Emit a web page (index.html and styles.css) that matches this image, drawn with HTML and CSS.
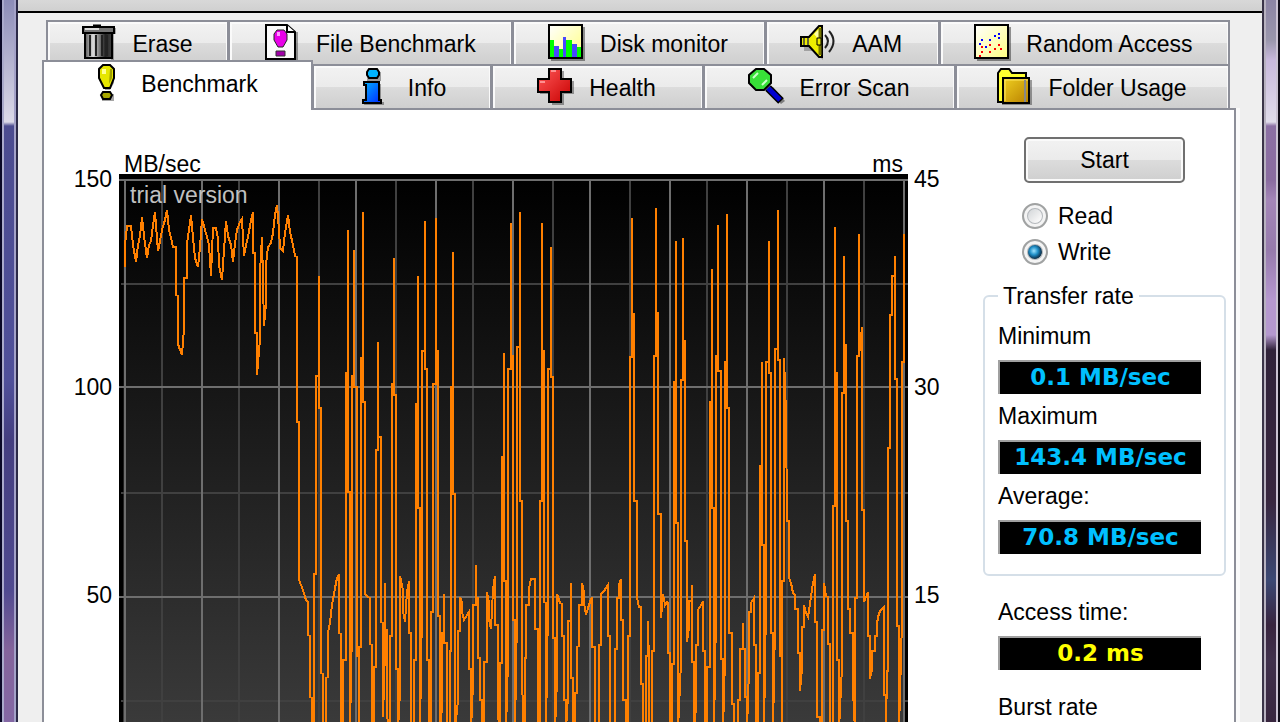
FILE: index.html
```
<!DOCTYPE html>
<html lang="en">
<head>
    <meta charset="UTF-8">
    <meta name="viewport" content="width=device-width, initial-scale=1.0">
    <title>Disk Benchmark</title>
    <link rel="stylesheet" href="styles.css">
</head>
<body>
    <div class="window">
        <div class="frame frame-left"></div>
        <main class="client">
            <div class="toolbar-edge"></div>

            <div class="tabs" role="tablist">
                <div class="tab-row tab-row-back">
                    <button class="tab" role="tab">
                        <svg class="icon" viewBox="0 0 36 36">
                            <defs>
                                <linearGradient id="metal" x1="0" x2="1" y1="0" y2="0">
                                    <stop offset="0" stop-color="#555"/>
                                    <stop offset=".3" stop-color="#ddd"/>
                                    <stop offset=".55" stop-color="#777"/>
                                    <stop offset=".75" stop-color="#222"/>
                                    <stop offset="1" stop-color="#444"/>
                                </linearGradient>
                            </defs>
                            <path d="M32 4h3v6h-2v26h-3z" fill="#000" opacity=".3"/>
                            <path d="M4 9h27v25H4z" fill="url(#metal)" stroke="#000" stroke-width="2"/>
                            <path d="M2 3h31v6H2z" fill="#777" stroke="#000" stroke-width="2"/>
                            <path d="M12 2h8" stroke="#000" stroke-width="3"/>
                            <path d="M4 5h14" stroke="#ddd" stroke-width="2"/>
                            <path d="M9 11v21M15 11v21M21 11v21M26 11v21" stroke="#222" stroke-width="2"/>
                        </svg>
                        Erase
                    </button>
                    <button class="tab" role="tab">
                        <svg class="icon" viewBox="0 0 36 36">
                            <path d="M5 37h29V8h-2v26H5z" fill="#000" opacity=".35"/>
                            <path d="M2 1h21l8 7v27H2z" fill="#fafafa" stroke="#000" stroke-width="2"/>
                            <path d="M23 1v7h8" fill="#fff" stroke="#000" stroke-width="2"/>
                            <path d="M13 6h7l3 4v6l-4 7h-5l-4-7v-6z" fill="#e800e8" stroke="#222" stroke-width="1"/>
                            <path d="M13 8h3v4h-3z" fill="#ff9cff"/>
                            <path d="M12 27h9v5h-9z" fill="#a000a8" stroke="#333" stroke-width="1"/>
                        </svg>
                        File Benchmark
                    </button>
                    <button class="tab" role="tab">
                        <svg class="icon" viewBox="0 0 36 36">
                            <defs>
                                <linearGradient id="paper" x1="0" y1="0" x2="1" y2="1">
                                    <stop offset="0" stop-color="#fff"/>
                                    <stop offset="1" stop-color="#ffff80"/>
                                </linearGradient>
                            </defs>
                            <path d="M3 3h34v34H3z" fill="#000" opacity=".4"/>
                            <path d="M1 1h33v33H1z" fill="url(#paper)" stroke="#000" stroke-width="2"/>
                            <path d="M2 16h4v17H2zM11 25h4v8h-4zM18 16h6v17h-6zM29 23h4v10h-4z" fill="#0f0"/>
                            <path d="M6 22h5v11H6zM15 13h3v20h-3zM24 20h5v13h-5z" fill="#4848ff"/>
                        </svg>
                        Disk monitor
                    </button>
                    <button class="tab" role="tab">
                        <svg class="icon" viewBox="0 0 36 36">
                            <path d="M23 4v32l-9-9H4v-4h18z" fill="#000" opacity=".25"/>
                            <path d="M1 13h8L19 2h3v31h-3L9 22H1z" fill="#ee0" stroke="#000" stroke-width="2"/>
                            <path d="M4 14v7M8 14v7" stroke="#663" stroke-width="2"/>
                            <path d="M14 10l5-5v11z" fill="#ffffa0"/>
                            <path d="M20 4v27" stroke="#770" stroke-width="3"/>
                            <path d="M17 14h4v7h-4z" fill="#ee0" stroke="#000" stroke-width="1"/>
                            <path d="M25 11q6 6 0 13M29 7q9 10 0 21" fill="none" stroke="#222" stroke-width="2"/>
                        </svg>
                        AAM
                    </button>
                    <button class="tab" role="tab">
                        <svg class="icon" viewBox="0 0 36 36">
                            <path d="M3 3h34v34H3z" fill="#000" opacity=".4"/>
                            <path d="M1 1h33v33H1z" fill="url(#paper)" stroke="#000" stroke-width="2"/>
                            <path d="M5 19h2v2H5zM7 15h2v2H7zM11 22h2v2h-2zM15 15h2v2h-2zM20 11h2v2h-2zM24 9h2v2h-2zM24 13h2v2h-2z" fill="#00f"/>
                            <path d="M5 31h2v2H5zM7 22h2v2H7zM7 27h2v2H7zM15 20h2v2h-2zM15 27h2v2h-2zM20 24h2v2h-2zM24 20h2v2h-2zM26 24h2v2h-2z" fill="#f00"/>
                        </svg>
                        Random Access
                    </button>
                </div>
                <div class="tab-row tab-row-front">
                    <button class="tab active" role="tab" aria-selected="true">
                        <svg class="icon" viewBox="0 0 36 36">
                            <path d="M14 3h11v16l-4 7h-5zM13 30h12v7H13z" fill="#000" opacity=".35"/>
                            <path d="M14 1h7l4 4v9l-4 10h-6L10 14V5z" fill="#e6e600" stroke="#000" stroke-width="2"/>
                            <path d="M13 5h4v5h-4z" fill="#ffff90"/>
                            <path d="M21 5h2v9l-3 6z" fill="#a0a000"/>
                            <path d="M14 28h7l2 3-2 4h-7l-2-4z" fill="#a8a800" stroke="#000" stroke-width="2"/>
                        </svg>
                        Benchmark
                    </button>
                    <button class="tab" role="tab">
                        <svg class="icon" viewBox="0 0 36 36">
                            <defs>
                                <linearGradient id="blue" x1="0" y1="0" x2="1" y2="1">
                                    <stop offset="0" stop-color="#00b4ff"/>
                                    <stop offset="1" stop-color="#0028ff"/>
                                </linearGradient>
                            </defs>
                            <path d="M12 4h13v9h-4v3h4v18h3v3H8z" fill="#000" opacity=".35"/>
                            <path d="M13 1h8l2 3v3l-2 3h-8l-2-3V4z" fill="#00b4ff" stroke="#000" stroke-width="2"/>
                            <path d="M8 14h15v18h2v3H7v-3h3V17H8z" fill="url(#blue)" stroke="#000" stroke-width="2"/>
                        </svg>
                        Info
                    </button>
                    <button class="tab" role="tab">
                        <svg class="icon" viewBox="0 0 36 36">
                            <defs>
                                <linearGradient id="red" x1="0" y1="0" x2="1" y2="1">
                                    <stop offset="0" stop-color="#ff5858"/>
                                    <stop offset="1" stop-color="#c80000"/>
                                </linearGradient>
                            </defs>
                            <path d="M15 3h12v10h10v13H27v11H15V26H3V13h12z" fill="#000" opacity=".35"/>
                            <path d="M12 1h12v10h10v13H24v10H12V24H1V11h11z" fill="url(#red)" stroke="#000" stroke-width="2"/>
                            <path d="M14 3h5M3 14h5" stroke="#ff9090" stroke-width="2"/>
                        </svg>
                        Health
                    </button>
                    <button class="tab" role="tab">
                        <svg class="icon" viewBox="0 0 36 36">
                            <path d="M22 24l11 12 4-3L25 19z" fill="#000" opacity=".4"/>
                            <path d="M20 20l13 13" stroke="#000" stroke-width="8"/>
                            <path d="M20 20l12 12" stroke="#0000d0" stroke-width="5"/>
                            <path d="M8 1h8l7 6v8l-7 7H8l-7-7V7z" fill="#38e038" stroke="#000" stroke-width="2"/>
                            <path d="M5 10l5-5M14 17l5-5" stroke="#c8ffc8" stroke-width="2"/>
                        </svg>
                        Error Scan
                    </button>
                    <button class="tab" role="tab">
                        <svg class="icon" viewBox="0 0 36 36">
                            <defs>
                                <linearGradient id="gold" x1="0" y1="0" x2="1" y2="1">
                                    <stop offset="0" stop-color="#f0d020"/>
                                    <stop offset="1" stop-color="#b88000"/>
                                </linearGradient>
                            </defs>
                            <path d="M6 37h30V12h-3v22H6z" fill="#000" opacity=".35"/>
                            <path d="M2 34V5l3-4h8l3 4h14v6H7v23z" fill="#ffff30" stroke="#000" stroke-width="2"/>
                            <path d="M7 10h26v25H7z" fill="url(#gold)" stroke="#000" stroke-width="2"/>
                            <path d="M9 33V12h23" fill="none" stroke="#ffe860" stroke-width="1"/>
                            <path d="M29 12v22" stroke="#888" stroke-width="2"/>
                        </svg>
                        Folder Usage
                    </button>
                </div>
            </div>

            <section class="panel">
                <div class="chart">
                    <div class="axis axis-left">
                        <span>150</span>
                        <span>100</span>
                        <span>50</span>
                    </div>
                    <div class="units"><span>MB/sec</span><span>ms</span></div>
                    <div class="plot">
                        <svg class="plot-svg" viewBox="119 174 789 548" preserveAspectRatio="none">
                            <defs>
                                <linearGradient id="plotBg" x1="0" x2="0" y1="0" y2="1">
                                    <stop offset="0" stop-color="#000"/>
                                    <stop offset="1" stop-color="#3a3a3a"/>
                                </linearGradient>
                            </defs>
                            <path class="plot-border" d="M119 174h789v548H119z"/>
                            <path d="M123 179h782v543H123z" fill="url(#plotBg)"/>
                            <path class="grid-minor" d="M162 180v542M239 180v542M319 180v542M396 180v542M473 180v542M553 180v542M630 180v542M707 180v542M787 180v542M864 180v542"/>
                            <path class="grid-minor" d="M121 284h787M121 493h787M121 701h787"/>
                            <path class="grid-major" d="M125 180v542M202 180v542M279 180v542M356 180v542M436 180v542M513 180v542M590 180v542M670 180v542M747 180v542M824 180v542M904 180v542"/>
                            <path class="grid-major" d="M119 180h789M119 387h789M119 597h789"/>
                            <!-- transfer rate trace -->
                            <polyline class="trace" points="
                                125,267 125,245 127,226 131,226 133,245 136,262 138,245 140,236 142,217 144,236 147,258 149,245 151,241 153,225 155,212
                                158,251 160,241 162,230 165,220 167,210 169,230 171,238 173,247 176,247 176,295 178,296 178,344 180,350 182,355 184,328
                                184,278 187,278 187,243 189,230 191,215 193,238 195,258 198,267 200,247 202,219 205,230 207,237 209,245 211,276 213,228
                                216,228 218,239 219,265 222,280 224,250 226,221 228,236 231,245 233,262 235,243 237,230 240,222 242,219 244,256 246,245
                                248,237 251,220 253,212 253,253 255,253 255,333 257,333 257,375 260,339 260,272 262,237 264,326 266,304 266,265 268,247
                                271,243 273,233 275,215 277,205 279,230 280,248 283,251 285,233 288,215 290,232 293,245 295,256 297,257 297,422 299,422
                                299,580 301,585 303,590 306,600 308,602 308,635 310,636 310,697 312,698 312,730 314,730 314,574 316,574 316,376 319,376
                                319,276 319,408 321,408 321,673 323,674 323,730 326,730 326,678 328,677 328,632 330,623 332,605 335,588 337,578 339,574
                                339,633 341,634 341,730 343,730 343,660 346,660 346,373 348,373 348,230 348,492 350,492 350,730 352,627 352,376 354,376
                                354,250 354,387 357,387 357,656 359,656 359,730 359,647 361,647 361,358 363,358 363,212 363,402 365,402 365,594 368,597
                                370,598 370,644 372,645 372,730 374,730 374,667 376,667 376,450 378,450 378,342 378,437 381,437 381,622 383,623 383,717
                                385,649 385,583 385,630 387,630 387,717 390,730 390,636 392,636 392,384 394,384 394,258 394,395 396,395 396,669 398,669
                                398,730 400,691 400,576 403,590 403,611 405,622 407,592 409,581 409,633 411,633 411,730 414,730 414,660 416,660 416,404
                                418,404 418,276 418,508 420,508 420,730 422,609 422,351 425,351 425,221 425,369 427,369 427,660 429,660 429,730 431,730
                                431,612 433,612 433,384 436,384 436,218 436,351 438,351 438,616 440,616 440,730 442,708 442,633 444,633 444,594 444,643
                                447,643 447,730 450,730 450,651 451,651 451,387 453,387 453,252 453,494 455,494 455,730 458,700 458,631 460,631 460,597
                                462,603 462,612 464,620 467,615 469,612 469,669 471,669 471,730 473,684 473,605 476,605 476,565 476,605 478,597 478,658
                                480,658 480,700 482,700 482,730 484,730 484,662 487,662 487,592 489,603 489,620 491,629 493,590 495,576 495,625 498,625
                                498,717 500,730 500,663 502,663 502,457 504,457 504,353 504,581 506,581 506,730 508,660 508,369 511,369 511,223 511,369
                                513,355 513,620 515,620 515,730 517,616 517,347 520,347 520,212 520,501 522,501 522,658 523,730 525,730 525,658 526,658
                                526,605 529,605 529,588 531,579 535,579 535,629 538,629 538,730 540,730 540,501 542,501 542,223 542,351 544,351 544,602
                                546,603 546,730 548,606 548,369 551,369 551,247 551,377 553,377 553,638 555,638 555,730 557,680 557,594 560,603 562,604
                                562,636 564,636 564,700 566,700 566,730 568,696 568,621 571,621 571,583 571,678 573,678 573,730 575,730 575,693 577,693
                                577,647 579,646 579,605 582,605 582,583 584,592 584,603 586,615 588,608 590,602 592,597 592,647 595,647 595,730 599,730
                                599,645 601,645 601,594 604,591 606,588 608,585 608,636 610,636 610,730 615,730 615,649 617,649 617,598 619,598 619,585
                                621,579 621,620 623,620 623,700 626,700 626,730 628,730 628,636 630,636 630,357 632,357 632,218 632,314 634,314 634,501
                                637,501 637,597 639,607 641,607 641,684 643,684 643,730 646,730 646,656 648,656 648,621 649,667 649,730 652,730 652,651
                                654,651 654,356 656,356 656,208 656,356 658,312 658,514 661,514 661,618 663,594 665,605 667,602 668,603 668,653 670,653
                                670,730 672,730 672,664 674,664 674,382 676,382 676,241 676,523 678,523 678,730 681,662 681,380 683,380 683,238 683,380
                                685,340 685,541 687,541 687,642 689,627 689,601 692,601 692,585 692,662 694,662 694,730 696,707 696,645 698,645 698,610
                                701,605 703,601 703,651 705,651 705,730 707,730 707,667 710,667 710,402 712,402 712,269 712,508 714,508 714,730 716,616
                                716,356 718,356 718,225 718,371 721,371 721,659 723,659 723,730 725,658 725,362 727,362 727,214 727,408 729,408 729,633
                                732,633 732,704 734,704 734,730 738,730 738,700 740,700 740,649 743,649 743,623 743,649 745,649 745,697 747,697 747,730
                                749,669 749,612 751,612 751,603 754,598 754,645 756,645 756,730 758,730 758,673 760,673 760,466 762,466 762,362 762,545
                                764,545 764,730 766,605 766,362 769,362 769,241 769,373 771,373 771,633 773,633 773,730 775,625 775,349 778,349 778,210
                                778,360 780,360 780,656 782,656 782,730 782,581 784,581 784,358 786,413 787,521 789,521 789,578 791,583 793,593 795,595
                                795,609 798,609 798,653 800,653 800,691 802,669 802,627 804,627 804,605 806,613 808,617 811,597 813,583 815,574 815,622
                                817,622 817,717 820,717 820,730 822,720 822,630 824,630 824,583 826,596 828,597 828,644 830,644 830,730 833,730 833,506
                                835,506 835,227 835,373 837,373 837,660 839,660 839,730 842,667 842,393 844,393 844,256 844,393 846,344 846,521 848,521
                                848,609 850,609 850,633 853,633 853,691 855,730 855,598 857,598 857,356 859,356 859,234 859,356 862,327 862,510 864,510
                                864,602 866,597 868,592 868,636 870,636 870,679 872,669 872,651 875,651 875,636 877,636 877,623 879,613 881,610 884,607
                                884,695 886,695 886,730 887,671 888,671 888,448 890,448 890,315 892,315 892,276 895,276 895,256 895,379 897,379 897,626
                                899,626 899,730 902,620 902,362 904,362 904,234"/>
                        </svg>
                        <span class="watermark">trial version</span>
                    </div>
                    <div class="axis axis-right">
                        <span>45</span>
                        <span>30</span>
                        <span>15</span>
                    </div>
                </div>

                <aside class="sidebar">
                    <button class="start-btn">Start</button>
                    <div class="modes">
                        <label class="mode"><input type="radio" name="mode" value="read">Read</label>
                        <label class="mode"><input type="radio" name="mode" value="write" checked>Write</label>
                    </div>
                    <fieldset class="rates">
                        <legend>Transfer rate</legend>
                        <div class="stat">
                            <label for="minRate">Minimum</label>
                            <output class="value" id="minRate">0.1 MB/sec</output>
                        </div>
                        <div class="stat">
                            <label for="maxRate">Maximum</label>
                            <output class="value" id="maxRate">143.4 MB/sec</output>
                        </div>
                        <div class="stat">
                            <label for="avgRate">Average:</label>
                            <output class="value" id="avgRate">70.8 MB/sec</output>
                        </div>
                    </fieldset>
                    <div class="others">
                        <div class="stat">
                            <label for="accessTime">Access time:</label>
                            <output class="value yellow" id="accessTime">0.2 ms</output>
                        </div>
                        <div class="stat">
                            <span>Burst rate</span>
                        </div>
                    </div>
                </aside>
            </section>
        </main>
        <div class="frame frame-right"></div>
    </div>
</body>
</html>
```
FILE: styles.css
```
* {
    box-sizing: border-box;
}
body {
    margin: 0;
    font-family: "Liberation Sans", Arial, sans-serif;
    font-size: 23px;
    line-height: 26px;
    color: #000;
    background: #efefef;
}
button {
    font: inherit;
    color: inherit;
    cursor: pointer;
}
.window {
    display: flex;
    height: 100vh;
    overflow: hidden;
}

/* window glass on both sides */
.frame {
    flex: none;
    width: 18px;
    border-style: solid;
}
.frame-left {
    border-width: 0 2px 0 2px;
    border-color: #2c2a48 #2c2a48 #2c2a48 #0a0826;
    box-shadow: inset 2px 0 #aaaacc, inset -2px 0 #a4a2c8;
    background: linear-gradient(#8c8cb8 0, #dcdae8 122px, #4c4c90 126px, #50509a 380px, #443e80 440px, #504a90 590px, #84649c 650px, #8468a4 100%);
}
.frame-right {
    border-width: 0 2px 0 2px;
    border-color: #100c18 #100c18 #100c18 #3a3448;
    box-shadow: inset 2px 0 #b8b2c0, inset -2px 0 #cac2d2;
    background: linear-gradient(#8c84a4 0, #9a96ac 40px, #c8b8dc 60px, #e0dcea 122px, #8c70a4 126px, #8a6ca0 180px, #a486b8 200px, #967aac 250px, #b698d0 300px, #b498ce 335px, #30223a 350px, #38263f 500px, #3c4874 580px, #38243f 625px, #40304c 660px, #38263f 100%);
}

.client {
    flex: 1;
    min-width: 0;
    display: flex;
    flex-direction: column;
}
.toolbar-edge {
    flex: none;
    height: 13px;
    background: linear-gradient(#d8d8d8, #d0d0d0);
    border-bottom: 2px solid #000;
}

/* tabs */
.tabs {
    padding: 7px 32px 0 24px;
}
.tab-row {
    display: grid;
    height: 44px;
}
.tab-row-back {
    grid-template-columns: 183fr 284fr 252fr 174fr 290fr;
    margin-left: 4px;
}
.tab-row-front {
    grid-template-columns: 271fr 179fr 212fr 252fr 274fr;
}
.tab {
    display: flex;
    align-items: center;
    justify-content: center;
    gap: 16px;
    padding: 2px 2px 0 0;
    white-space: nowrap;
    border: 2px solid #8c8e98;
    border-bottom: 0;
    border-left-width: 1px;
    box-shadow: inset 2px 2px #fafafa, inset -1px 0 #fafafa;
    background: linear-gradient(#f2f2f2 0, #ebebeb 50%, #dcdcdc 50%, #cfcfcf 100%);
}
.tab:first-child {
    border-left-width: 2px;
}
.tab.active {
    position: relative;
    z-index: 1;
    margin: -4px 0 -2px;
    padding: 0 8px 4px 0;
    background: #fff;
    box-shadow: none;
}
.icon {
    width: 36px;
    height: 36px;
    margin-bottom: 4px;
    flex: none;
    overflow: visible;
}

/* benchmark page */
.panel {
    flex: 1;
    display: flex;
    align-items: flex-start;
    margin: 0 26px 0 24px;
    padding-right: 8px;
    background: #fff;
    border: 2px solid #8c8e98;
    border-bottom: 0;
    box-shadow: 4px 0 #fafafa;
}
.chart {
    flex: 1;
    min-width: 0;
    display: grid;
    grid-template-columns: 75px 1fr 75px;
    grid-template-rows: 23px auto;
    padding-top: 41px;
}
.axis {
    grid-row: 1 / 3;
    display: grid;
    grid-auto-rows: 208px;
    align-content: start;
    padding-top: 15px;
}
.axis-left {
    grid-column: 1;
    text-align: right;
    padding-right: 7px;
}
.axis-right {
    grid-column: 3;
    padding-left: 6px;
}
.units {
    grid-column: 2;
    grid-row: 1;
    display: flex;
    justify-content: space-between;
    padding: 0 5px;
}
.plot {
    grid-column: 2;
    grid-row: 2;
    position: relative;
}
.plot-svg {
    display: block;
    width: 100%;
    height: 548px;
    shape-rendering: crispEdges;
}
.plot-border {
    fill: #000;
}
.grid-minor {
    stroke: #404040;
    stroke-width: 2;
}
.grid-major {
    stroke: #6e6e6e;
    stroke-width: 2;
}
.trace {
    fill: none;
    stroke: #ff8000;
    stroke-width: 2;
}
.watermark {
    position: absolute;
    left: 11px;
    top: 8px;
    color: #c0c0c0;
}

/* right column */
.sidebar {
    flex: none;
    width: 243px;
    padding-top: 27px;
}
.start-btn {
    display: block;
    width: 161px;
    height: 46px;
    margin: 0 auto;
    border: 2px solid #707070;
    border-radius: 5px;
    box-shadow: inset 0 0 0 2px #fafafa;
    background: linear-gradient(#f2f2f2 0, #ebebeb 50%, #dcdcdc 50%, #cfcfcf 100%);
}
.modes {
    margin-top: 15px;
    padding-left: 39px;
}
.mode {
    display: flex;
    align-items: center;
    gap: 10px;
    height: 36px;
}
.mode input {
    appearance: none;
    width: 26px;
    height: 26px;
    margin: 0;
    border: 2px solid #a0a2a2;
    border-radius: 50%;
    box-shadow: inset 0 0 0 3px #f4f4f4, inset 0 0 0 4px #b4b8bc;
    background: linear-gradient(135deg, #c4c8cc, #f8f8f8 70%);
}
.mode input:checked {
    background: radial-gradient(circle at 45% 45%, #a0e4ff 0, #2090c8 4px, #104468 7px, #14384e 8px, #d8dcde 9px);
}
.rates {
    min-width: 0;
    margin: 13px 0 0;
    padding: 14px 13px 20px;
    border: 2px solid #d5dfe8;
    border-radius: 6px;
}
.rates legend {
    padding: 0 5px;
}
.stat {
    display: flex;
    flex-direction: column;
    gap: 11px;
}
.rates .stat + .stat {
    margin-top: 9px;
}
.value {
    width: 203px;
    height: 34px;
    padding-top: 2px;
    background: #000;
    border: 2px solid #a0a0a0;
    border-right: 0;
    border-bottom: 0;
    color: #00c0ff;
    font-family: "DejaVu Sans", Verdana, sans-serif;
    font-weight: bold;
    text-align: center;
}
.value.yellow {
    color: #ff0;
}
.others {
    display: flex;
    flex-direction: column;
    gap: 24px;
    margin-top: 23px;
    padding-left: 15px;
}
```
